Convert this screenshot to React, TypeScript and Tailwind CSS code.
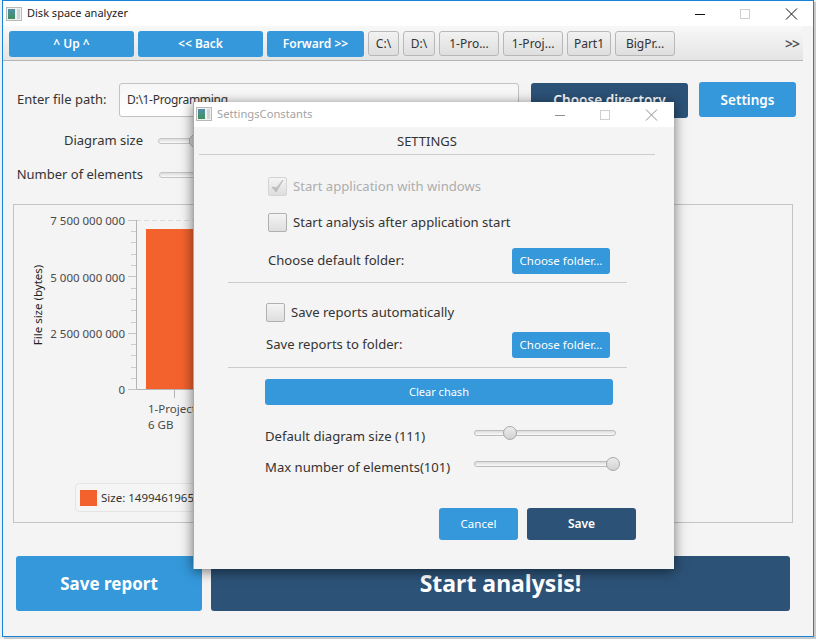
const blue = 'bg-[#3498db] text-white rounded-[3px]';
const crumbs = [
  { label: 'C:\\', w: 'w-[31px]' },
  { label: 'D:\\', w: 'w-[32px]' },
  { label: '1-Pro...', w: 'w-[60px]' },
  { label: '1-Proj...', w: 'w-[60px]' },
  { label: 'Part1', w: 'w-[44px]' },
  { label: 'BigPr...', w: 'w-[60px]' },
];

function AppIcon() {
  return (
    <svg width="16" height="16" viewBox="0 0 16 16" className="shrink-0">
      <defs>
        <linearGradient id="ico" x1="0" y1="0" x2="0" y2="1">
          <stop offset="0" stopColor="#4f8fa8" />
          <stop offset="1" stopColor="#3f8f5c" />
        </linearGradient>
      </defs>
      <rect x="0.5" y="1.5" width="15" height="13" fill="#f1f1f1" stroke="#b8b8b8" />
      <rect x="2" y="3" width="7" height="10" fill="url(#ico)" />
      <rect x="11" y="3" width="3" height="10" fill="#d0d4d6" />
    </svg>
  );
}

function WinControls({ muted }: { muted?: boolean }) {
  const c = muted ? '#8e8e8e' : '#111111';
  return (
    <svg width="118" height="12" viewBox="0 0 118 12" className="shrink-0">
      <line x1="15" y1="6.5" x2="25" y2="6.5" stroke={c} />
      <rect x="60.5" y="1.5" width="9" height="9" fill="none" stroke="#cfcfcf" />
      <path d="M106 0.5 L117 11.5 M117 0.5 L106 11.5" stroke={c} fill="none" />
    </svg>
  );
}

function Check({ checked, disabled }: { checked?: boolean; disabled?: boolean }) {
  return (
    <span
      className={`flex h-[19px] w-[19px] shrink-0 items-center justify-center rounded-[2px] border bg-gradient-to-b from-[#f4f4f4] to-[#dedede] ${
        disabled ? 'border-[#d4d4d4]' : 'border-[#b0b0b0]'
      }`}
    >
      {checked && (
        <svg width="15" height="15" viewBox="0 0 15 15">
          <path d="M2 8 L6 13 L13 1 L6.5 9 Z" fill="#bdbdbd" stroke="#bdbdbd" />
        </svg>
      )}
    </span>
  );
}

function Slider({ thumb }: { thumb: string }) {
  return (
    <div className="relative h-[6px] w-[142px] rounded-full border border-[#bcbcbc] bg-gradient-to-b from-[#dcdcdc] to-[#fafafa]">
      <span className={`absolute top-[-5px] h-[14px] w-[14px] rounded-full border border-[#a8a8a8] bg-gradient-to-b from-[#ececec] to-[#d2d2d2] ${thumb}`} />
    </div>
  );
}

function Chart() {
  const minors = [231, 242, 254, 265, 288, 299, 310, 322, 344, 355, 367, 378];
  const labels = [
    { y: 221, t: '7 500 000 000' },
    { y: 278, t: '5 000 000 000' },
    { y: 334, t: '2 500 000 000' },
    { y: 390, t: '0' },
  ];
  return (
    <svg viewBox="14 205 778 317" className="block h-full w-full text-[11.5px]">
      <line x1="136" y1="220.5" x2="200" y2="220.5" stroke="#dcdcdc" strokeDasharray="5 3" />
      <rect x="146" y="229" width="60" height="160" fill="#f3622d" />
      <path d="M136.5 220 V389.5 H240" fill="none" stroke="#b4b4b4" />
      {[220, 276, 333, 389].map((y) => (
        <line key={y} x1="128" x2="136" y1={y + 0.5} y2={y + 0.5} stroke="#c4c4c4" />
      ))}
      {minors.map((y) => (
        <line key={y} x1="131" x2="136" y1={y + 0.5} y2={y + 0.5} stroke="#cccccc" />
      ))}
      <line x1="174.5" x2="174.5" y1="389" y2="398" stroke="#b4b4b4" />
      {labels.map((l) => (
        <text key={l.t} x="125" y={l.y + 4} textAnchor="end" fill="#4a4a4a">
          {l.t}
        </text>
      ))}
      <text transform="translate(42 305) rotate(-90)" textAnchor="middle" fill="#222222" className="text-[11.5px]">
        File size (bytes)
      </text>
      <text x="148" y="413" fill="#4a4a4a">1-Project</text>
      <text x="148" y="429" fill="#4a4a4a">6 GB</text>
      <rect x="75.5" y="483.5" width="180" height="28" rx="4" fill="#f5f5f5" stroke="#e4e4e4" />
      <rect x="80" y="490" width="17" height="16" fill="#f3622d" />
      <text x="101" y="502" fill="#333333">Size: 1499461965</text>
    </svg>
  );
}

function SettingsWindow() {
  return (
    <div className="absolute left-[193px] top-[102px] flex h-[467px] w-[481px] flex-col border-l border-[#a9a9a9] bg-[#f4f4f4] text-[13.1px] text-[#333333] shadow-[0_2px_12px_rgba(0,0,0,0.55)]">
      <div className="flex h-[25px] shrink-0 items-center justify-between bg-white pl-[2px] pr-[16px]">
        <div className="flex items-center gap-[5px]">
          <AppIcon />
          <span className="text-[11.2px] text-[#a3a3a3]">SettingsConstants</span>
        </div>
        <WinControls muted />
      </div>

      <div className="ml-[5px] h-[28px] w-[456px] border-b border-[#cccccc] pt-[4px] text-center text-[13px] leading-[20px]">
        SETTINGS
      </div>

      <div className="ml-[74px] mt-[22px] flex h-[19px] items-center gap-[6px] text-[#adadad]">
        <Check checked disabled />
        <span>Start application with windows</span>
      </div>
      <div className="ml-[74px] mt-[17px] flex h-[19px] items-center gap-[6px]">
        <Check />
        <span>Start analysis after application start</span>
      </div>
      <div className="ml-[74px] mt-[16px] flex h-[26px] w-[342px] items-center justify-between">
        <span>Choose default folder:</span>
        <button className={`${blue} h-[26px] w-[98px] text-[11.5px]`}>Choose folder...</button>
      </div>
      <div className="ml-[34px] mt-[8px] h-px w-[399px] bg-[#cccccc]" />

      <div className="ml-[72px] mt-[20px] flex h-[19px] items-center gap-[6px]">
        <Check />
        <span>Save reports automatically</span>
      </div>
      <div className="ml-[72px] mt-[10px] flex h-[26px] w-[344px] items-center justify-between">
        <span>Save reports to folder:</span>
        <button className={`${blue} h-[26px] w-[98px] text-[11.5px]`}>Choose folder...</button>
      </div>
      <div className="ml-[34px] mt-[9px] h-px w-[399px] bg-[#cccccc]" />

      <button className={`${blue} ml-[71px] mt-[11px] h-[26px] w-[348px] shrink-0 text-[11px]`}>Clear chash</button>

      <div className="ml-[71px] mt-[19px] flex h-[24px] items-start">
        <span className="w-[209px] pt-[3px]">Default diagram size (111)</span>
        <div className="pt-[6px]">
          <Slider thumb="left-[28px]" />
        </div>
      </div>
      <div className="ml-[71px] mt-[7px] flex h-[24px] items-start">
        <span className="w-[209px] pt-[3px]">Max number of elements(101)</span>
        <div className="pt-[6px]">
          <Slider thumb="left-[131px]" />
        </div>
      </div>

      <div className="ml-[245px] mt-[29px] flex gap-[9px]">
        <button className={`${blue} h-[32px] w-[79px] text-[11.5px]`}>Cancel</button>
        <button className="h-[32px] w-[109px] rounded-[3px] bg-[#2c5277] text-[12px] font-semibold text-white">Save</button>
      </div>
    </div>
  );
}

export default function App() {
  return (
    <div className="relative h-[639px] w-[816px] overflow-hidden bg-[#f0f0f0] font-['Noto_Sans',sans-serif]">
      <div className="ml-[2px] flex h-[637px] w-[812px] flex-col border border-[#1883d7] bg-[#f4f4f4] text-[13px] text-[#333333] shadow-[2px_2px_0_#c9c9c9]">
        <div className="flex h-[25px] shrink-0 items-center justify-between bg-white pl-[3px] pr-[15px]">
          <div className="flex items-center gap-[5px]">
            <AppIcon />
            <span className="text-[11px] text-[#222222]">Disk space analyzer</span>
          </div>
          <WinControls />
        </div>

        <div className="flex h-[35px] w-[800px] shrink-0 items-start border-b border-[#b4b4b4] bg-gradient-to-b from-[#f8f8f8] to-[#e4e4e4] pl-[6px] pt-[5px]">
          <div className="flex gap-[4px]">
            <button className={`${blue} h-[26px] w-[125px] text-[12px] font-semibold`}>^ Up ^</button>
            <button className={`${blue} h-[26px] w-[125px] text-[12px] font-semibold`}>&lt;&lt; Back</button>
            <button className={`${blue} h-[26px] w-[97px] text-[12px] font-semibold`}>Forward &gt;&gt;</button>
            {crumbs.map((c) => (
              <button
                key={c.label}
                className={`h-[25px] ${c.w} rounded-[3px] border border-[#b8b8b8] bg-gradient-to-b from-[#f2f2f2] to-[#dedede] text-[12px] text-[#333333]`}
              >
                {c.label}
              </button>
            ))}
          </div>
          <span className="ml-[110px] mt-[3px] text-[14px] font-semibold leading-[20px] tracking-[-1px] text-[#555555]">&gt;&gt;</span>
        </div>

        <div className="ml-[14px] mt-[21px] flex h-[35px] items-center">
          <span className="w-[102px]">Enter file path:</span>
          <div className="flex h-[34px] w-[400px] items-center rounded-[3px] border border-[#c2c2c2] bg-gradient-to-b from-[#f6f6f6] to-white pl-[7px] text-[12px] tracking-[-0.3px]">
            D:\1-Programming
          </div>
          <button className="ml-[12px] mt-[1px] h-[35px] w-[157px] rounded-[3px] bg-[#2c5277] text-[13.6px] font-semibold text-white">Choose directory</button>
          <button className={`${blue} ml-[11px] h-[35px] w-[97px] pt-[2px] text-[13.5px] font-semibold`}>Settings</button>
        </div>

        <div className="mt-[14px] flex h-[20px] items-center">
          <span className="w-[140px] text-right">Diagram size</span>
          <div className="relative ml-[15px] h-[6px] w-[200px] rounded-full border border-[#c4c4c4] bg-gradient-to-b from-[#dcdcdc] to-[#fafafa]">
            <span className="absolute left-[30px] top-[-5px] h-[14px] w-[14px] rounded-full border border-[#a8a8a8] bg-[#dedede]" />
          </div>
        </div>
        <div className="mt-[14px] flex h-[20px] items-center">
          <span className="w-[140px] text-right">Number of elements</span>
          <div className="ml-[16px] h-[6px] w-[200px] rounded-full border border-[#c4c4c4] bg-gradient-to-b from-[#dcdcdc] to-[#fafafa]" />
        </div>

        <div className="ml-[10px] mt-[19px] h-[319px] w-[780px] border border-[#c4c4c4]">
          <Chart />
        </div>

        <div className="ml-[13px] mt-[33px] flex gap-[9px]">
          <button className={`${blue} h-[55px] w-[186px] text-[17px] font-bold`}>Save report</button>
          <button className="h-[55px] w-[579px] rounded-[3px] bg-[#2c5277] text-[23px] font-bold text-white">Start analysis!</button>
        </div>
      </div>

      <SettingsWindow />
    </div>
  );
}
